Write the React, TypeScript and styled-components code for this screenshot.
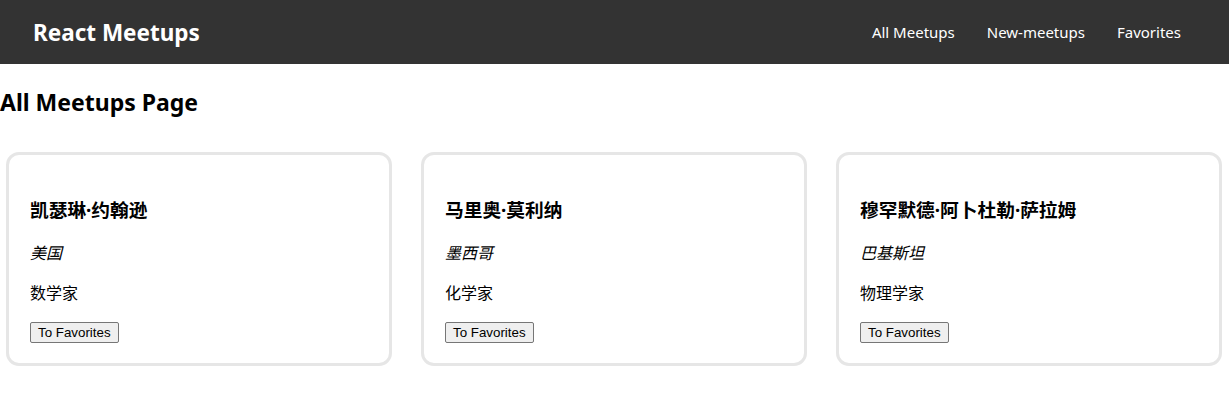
import React from "react";
import styled, { createGlobalStyle } from "styled-components";

const GlobalStyle = createGlobalStyle`
  html, body {
    margin: 0;
    padding: 0;
    background: #ffffff;
    font-family: "Noto Sans", "Noto Sans CJK SC", sans-serif;
    color: #000;
  }
  * { box-sizing: border-box; }
`;

const Header = styled.header`
  height: 64px;
  background: #333333;
  display: flex;
  align-items: center;
  justify-content: space-between;
  padding: 0 48px 0 33px;
`;

const Logo = styled.div`
  color: #ffffff;
  font-size: 22.5px;
  font-weight: 700;
`;

const NavList = styled.ul`
  list-style: none;
  margin: 0;
  padding: 0;
  display: flex;
  gap: 32px;
`;

const NavLink = styled.a`
  color: #ffffff;
  text-decoration: none;
  font-size: 15px;
`;

const Main = styled.main`
  padding: 0;
`;

const PageTitle = styled.h1`
  font-size: 23px;
  font-weight: 700;
  margin: 24px 0 36px;
  line-height: 28px;
`;

const Grid = styled.ul`
  list-style: none;
  margin: 0;
  padding: 0 7px 0 6px;
  display: grid;
  grid-template-columns: repeat(3, 1fr);
  gap: 29px;
`;

const Card = styled.li`
  border: 3px solid #e6e6e6;
  border-radius: 13px;
  padding: 43px 21px 20px;
  display: flex;
  flex-direction: column;
  align-items: flex-start;
`;

const Name = styled.h3`
  font-size: 18.72px;
  font-weight: 700;
  margin: 0 0 20px;
  line-height: 24px;
`;

const Country = styled.address`
  font-size: 16px;
  font-style: italic;
  margin: 0 0 18px;
  line-height: 22px;
`;

const Job = styled.p`
  font-size: 16px;
  margin: 0 0 18px;
  line-height: 22px;
`;

const Button = styled.button`
  font-family: "Liberation Sans", Arial, sans-serif;
  font-size: 13.333px;
  padding: 1px 7px;
  height: 21px;
  background: #efefef;
  border: 1px solid #767676;
  border-radius: 2px;
  color: #000;
`;

const people = [
  { name: "凯瑟琳·约翰逊", country: "美国", job: "数学家" },
  { name: "马里奥·莫利纳", country: "墨西哥", job: "化学家" },
  { name: "穆罕默德·阿卜杜勒·萨拉姆", country: "巴基斯坦", job: "物理学家" },
];

export default function App() {
  return (
    <>
      <GlobalStyle />
      <Header>
        <Logo>React Meetups</Logo>
        <nav>
          <NavList>
            <li><NavLink href="#">All Meetups</NavLink></li>
            <li><NavLink href="#">New-meetups</NavLink></li>
            <li><NavLink href="#">Favorites</NavLink></li>
          </NavList>
        </nav>
      </Header>
      <Main>
        <PageTitle>All Meetups Page</PageTitle>
        <Grid>
          {people.map((p) => (
            <Card key={p.name}>
              <Name>{p.name}</Name>
              <Country>{p.country}</Country>
              <Job>{p.job}</Job>
              <Button>To Favorites</Button>
            </Card>
          ))}
        </Grid>
      </Main>
    </>
  );
}
